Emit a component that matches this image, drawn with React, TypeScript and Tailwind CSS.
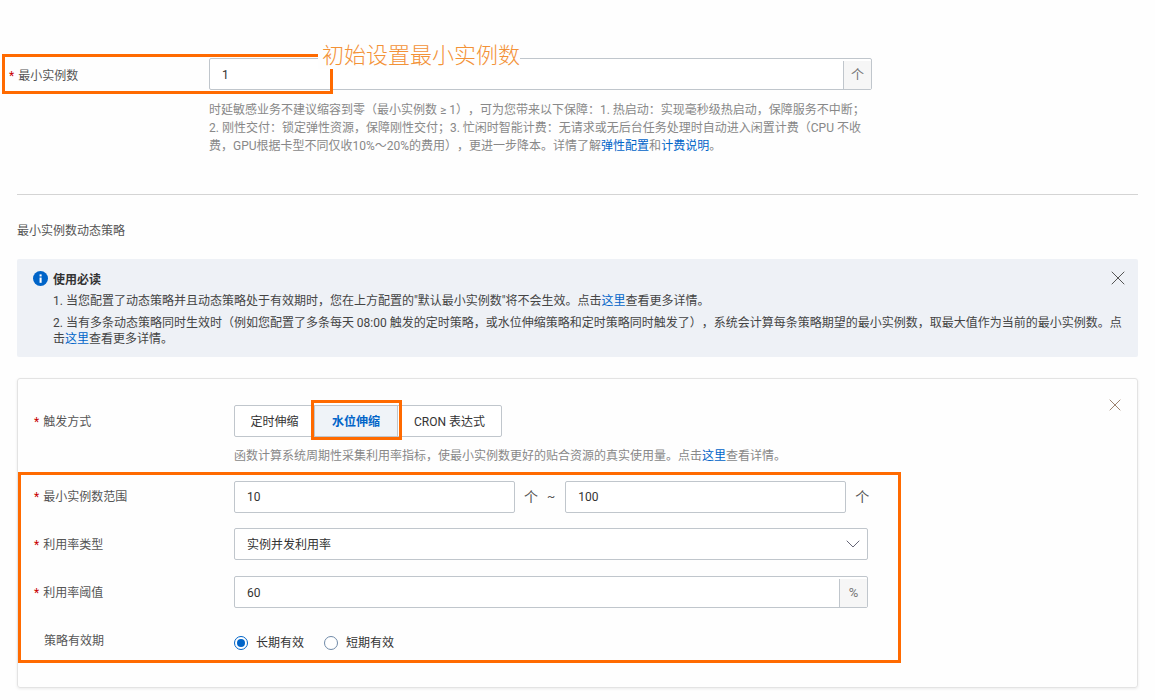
import { ChevronDown, X } from 'lucide-react';

const fontStack = "font-['Roboto','Noto_Sans_CJK_SC',sans-serif]";

function Label({ text, required = true, className = '' }: { text: string; required?: boolean; className?: string }) {
    return (
        <div className={`w-[200px] shrink-0 text-xs text-[#555] ${className}`}>
            {required ? <span className="mr-1 text-[#c80000]">*</span> : <span className="mr-[10px]" />}
            {text}
        </div>
    );
}

function Addon({ children }: { children: React.ReactNode }) {
    return (
        <div className="flex w-[28px] shrink-0 items-center justify-center border-l border-[#c0c6cc] bg-[#f6f6f6] text-[13px] text-[#777]">
            {children}
        </div>
    );
}

function Input({ value, className, addon }: { value: string; className: string; addon?: string }) {
    return (
        <div className={`flex h-8 rounded-[2px] border border-[#c0c6cc] bg-white text-xs text-[#333] ${className}`}>
            <div className="flex flex-1 items-center pl-3">{value}</div>
            {addon && <Addon>{addon}</Addon>}
        </div>
    );
}

function Radio({ text, checked }: { text: string; checked?: boolean }) {
    return (
        <div className="flex items-center gap-2 text-xs text-[#333]">
            <span
                className={`flex h-[14px] w-[14px] items-center justify-center rounded-full border bg-white ${checked ? 'border-[#0064c8]' : 'border-[#708aa8]'}`}
            >
                {checked && <span className="h-2 w-2 rounded-full bg-[#0064c8]" />}
            </span>
            {text}
        </div>
    );
}

function Link({ children }: { children: React.ReactNode }) {
    return <span className="text-[#0064c8]">{children}</span>;
}

export default function App() {
    return (
        <div lang="zh-CN" className={`relative h-[700px] overflow-hidden bg-[#fefefe] pt-[58px] [text-spacing-trim:space-all] ${fontStack}`}>
            {/* Minimum instances */}
            <div className="flex items-center pl-[9px]">
                <Label text="最小实例数" className="mt-[3px]" />
                <Input value="1" addon="个" className="w-[663px] pt-[2px]" />
            </div>
            <p className="ml-[209px] mt-[11px] w-[670px] text-xs leading-[18px] whitespace-nowrap text-[#888]">
                时延敏感业务不建议缩容到零（最小实例数 ≥ 1），可为您带来以下保障：1. 热启动：实现毫秒级热启动，保障服务不中断；
                <br />
                2. 刚性交付：锁定弹性资源，保障刚性交付；3. 忙闲时智能计费：无请求或无后台任务处理时自动进入闲置计费（CPU 不收
                <br />
                费，GPU根据卡型不同仅收10%～20%的费用），更进一步降本。详情了解<Link>弹性配置</Link>和<Link>计费说明</Link>。
            </p>

            <div className="mx-[17px]">
                <div className="mt-[39px] h-px bg-[#d4d4d4]" />
                <div className="mt-[27px] text-xs leading-[18px] text-[#555]">最小实例数动态策略</div>

                {/* Notice */}
                <div className="relative mt-[19px] h-[98px] rounded-[2px] bg-[#eef1f6] pl-9 pt-[13px] text-xs text-[#444]">
                    <svg className="absolute left-[16px] top-[12px] h-[15px] w-[15px]" viewBox="0 0 16 16">
                        <circle cx="8" cy="8" r="8" fill="#0064c8" />
                        <rect x="7" y="7" width="2.2" height="5.6" fill="#fff" />
                        <rect x="7" y="3.6" width="2.2" height="2.2" fill="#fff" />
                    </svg>
                    <X className="absolute right-[8px] top-[7px] h-6 w-6 text-[#555]" strokeWidth={1} />
                    <div className="font-bold leading-4 text-[#333]">使用必读</div>
                    <div className="mt-[5px] leading-4">
                        1. 当您配置了动态策略并且动态策略处于有效期时，您在上方配置的"默认最小实例数"将不会生效。点击<Link>这里</Link>查看更多详情。
                    </div>
                    <div className="mt-[6px] leading-4 whitespace-nowrap">
                        2. 当有多条动态策略同时生效时（例如您配置了多条每天 08:00 触发的定时策略，或水位伸缩策略和定时策略同时触发了），系统会计算每条策略期望的最小实例数，取最大值作为当前的最小实例数。点
                        <br />
                        击<Link>这里</Link>查看更多详情。
                    </div>
                </div>

                {/* Policy card */}
                <div className="relative mt-[21px] h-[310px] rounded-[3px] border border-[#e3e3e3] pl-[16px] pt-[26px] shadow-[0_1px_3px_rgba(0,0,0,0.08)]">
                    <X className="absolute right-[12px] top-[16px] h-5 w-5 text-[#8a6a52]" strokeWidth={1} />
                    <div className="flex items-center">
                        <Label text="触发方式" className="mt-[2px]" />
                        <div className="flex h-8 rounded-[2px] border border-[#c0c6cc] bg-white pt-px text-xs text-[#333]">
                            <div className="flex w-[79px] items-center justify-center">定时伸缩</div>
                            <div className="-mt-px flex w-[84px] items-center justify-center border-x border-[#c0c6cc] bg-[#eff3f8] pt-px font-bold text-[#0064c8]">
                                水位伸缩
                            </div>
                            <div className="flex w-[103px] items-center justify-center">CRON 表达式</div>
                        </div>
                    </div>
                    <p className="ml-[200px] mt-[10px] text-xs leading-[18px] text-[#888]">
                        函数计算系统周期性采集利用率指标，使最小实例数更好的贴合资源的真实使用量。点击<Link>这里</Link>查看详情。
                    </p>

                    <div className="mt-4 flex flex-col">
                        <div className="flex items-center">
                            <Label text="最小实例数范围" />
                            <Input value="10" className="w-[281px]" />
                            <span className="ml-[9px] text-sm text-[#555]">个</span>
                            <span className="ml-[9px] text-xs text-[#555]">~</span>
                            <Input value="100" className="ml-[10px] w-[281px]" />
                            <span className="ml-[9px] text-sm text-[#555]">个</span>
                        </div>
                        <div className="mt-[15px] flex items-center">
                            <Label text="利用率类型" className="mt-[2px]" />
                            <div className="flex h-8 w-[634px] items-center justify-between rounded-[2px] border border-[#c0c6cc] bg-white pl-3 pr-[2px] text-xs text-[#333]">
                                <span className="mt-[2px]">实例并发利用率</span>
                                <ChevronDown className="h-6 w-6 text-[#667]" strokeWidth={1} />
                            </div>
                        </div>
                        <div className="mt-4 flex items-center">
                            <Label text="利用率阈值" className="mt-[2px]" />
                            <Input value="60" addon="%" className="w-[634px] pt-[2px]" />
                        </div>
                        <div className="mt-[23px] flex items-center">
                            <Label text="策略有效期" required={false} />
                            <div className="mt-1 flex gap-5">
                                <Radio text="长期有效" checked />
                                <Radio text="短期有效" />
                            </div>
                        </div>
                    </div>
                </div>
            </div>

            {/* Orange annotations over the screenshot */}
            <div className="absolute left-[2px] top-[54px] h-[40px] w-[331px] border-[3px] border-[#ff6a00]" />
            <div className="absolute left-[318px] top-[43px] bg-[#fefefe] pl-1 text-[22px] font-light leading-[26px] text-[#f39237]">
                初始设置最小实例数
            </div>
            <div className="absolute left-[311px] top-[400px] h-[40px] w-[91px] border-[3px] border-[#ff6a00]" />
            <div className="absolute left-[18px] top-[472px] h-[191px] w-[883px] border-[3px] border-[#ff6a00]" />
        </div>
    );
}
